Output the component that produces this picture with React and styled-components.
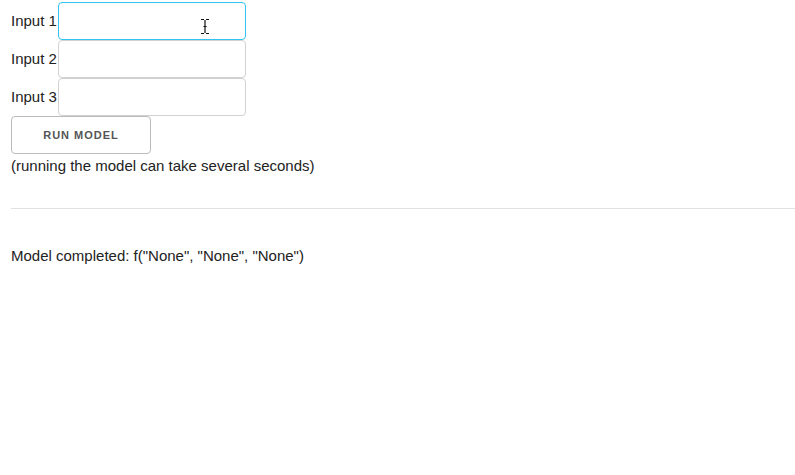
import React from "react";
import styled, { createGlobalStyle } from "styled-components";

const Global = createGlobalStyle`
  html, body { margin: 0; padding: 0; background: #fff; }
  body {
    font-family: "Liberation Sans", Arial, Helvetica, sans-serif;
    font-size: 15px;
    line-height: 1.6;
    color: #222;
  }
  * { box-sizing: border-box; }
`;

const Page = styled.div`
  position: relative;
  padding: 2px 0 0 11px;
`;

const Row = styled.div`
  display: flex;
  align-items: center;
  height: 38px;
`;

const Label = styled.label`
  font-size: 15px;
  color: #222;
`;

const Input = styled.input`
  width: 188px;
  height: 38px;
  margin: 0 0 0 1px;
  padding: 6px 10px;
  border: 1px solid ${(p) => (p.$focused ? "#33C3F0" : "#D1D1D1")};
  border-radius: 4px;
  background: #fff;
  outline: none;
  font-family: inherit;
  font-size: 15px;
`;

const Button = styled.button`
  display: block;
  height: 38px;
  width: 140px;
  padding: 0;
  color: #555;
  background: transparent;
  border: 1px solid #bbb;
  border-radius: 4px;
  font-family: "Liberation Sans", Arial, sans-serif;
  font-size: 11px;
  font-weight: 700;
  letter-spacing: 1px;
  text-transform: uppercase;
  text-align: center;
`;

const Note = styled.p`
  margin: 0;
  line-height: 24px;
`;

const Rule = styled.hr`
  border: 0;
  border-top: 1px solid #E1E1E1;
  margin: 30px 0 35px;
`;

const Result = styled.p`
  margin: 0;
  line-height: 24px;
`;

const Cursor = styled.svg`
  position: absolute;
  left: 199px;
  top: 18px;
`;

export default function App() {
  return (
    <>
      <Global />
      <Page>
        <Row>
          <Label>Input 1</Label>
          <Input $focused />
        </Row>
        <Row>
          <Label>Input 2</Label>
          <Input />
        </Row>
        <Row>
          <Label>Input 3</Label>
          <Input />
        </Row>
        <Button>Run Model</Button>
        <Note>(running the model can take several seconds)</Note>
        <Rule />
        <Result>Model completed: f("None", "None", "None")</Result>
        <Cursor width="12" height="17" viewBox="0 0 12 17">
          <path d="M2 1.5 H5 M7 1.5 H10 M6 2 V15 M2 15.5 H5 M7 15.5 H10 M4.5 8.5 H7.5" stroke="#111" strokeWidth="1.2" fill="none" />
        </Cursor>
      </Page>
    </>
  );
}
